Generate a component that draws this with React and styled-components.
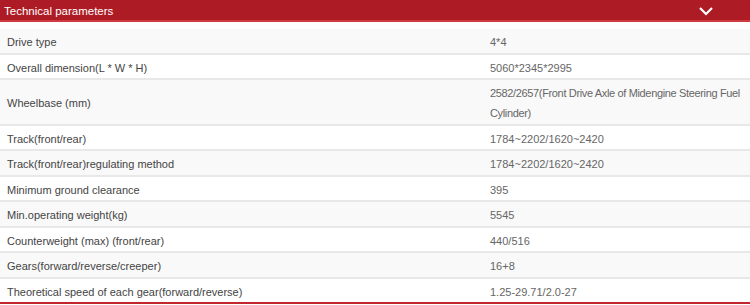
import styled, { createGlobalStyle } from "styled-components";

const rows = [
  ["Drive type", "4*4"],
  ["Overall dimension(L * W * H)", "5060*2345*2995"],
  ["Wheelbase (mm)", "2582/2657(Front Drive Axle of Midengine Steering Fuel\nCylinder)", true],
  ["Track(front/rear)", "1784~2202/1620~2420"],
  ["Track(front/rear)regulating method", "1784~2202/1620~2420"],
  ["Minimum ground clearance", "395"],
  ["Min.operating weight(kg)", "5545"],
  ["Counterweight (max) (front/rear)", "440/516"],
  ["Gears(forward/reverse/creeper)", "16+8"],
  ["Theoretical speed of each gear(forward/reverse)", "1.25-29.71/2.0-27"],
];

const GlobalStyle = createGlobalStyle`
  body {
    margin: 0;
    background: #fff;
    font-family: "Liberation Sans", Arial, sans-serif;
  }
`;

const Panel = styled.section`
  width: 750px;
  border-bottom: 2px solid #c1272d;
`;

const Header = styled.div`
  display: flex;
  align-items: center;
  justify-content: space-between;
  height: 22px;
  padding: 1px 36px 0 4px;
  box-sizing: border-box;
  background: #ad1c24;
  border-bottom: 2px solid #cf3b40;
  color: #fff;
  font-size: 11.5px;
`;

const Chevron = () => (
  <svg width="16" height="10" viewBox="0 0 16 10">
    <path d="M2 2 L8 8 L14 2" fill="none" stroke="#fff" strokeWidth="2.2" />
  </svg>
);

const Table = styled.div`
  margin-top: 7px;
`;

const Row = styled.div`
  display: grid;
  grid-template-columns: 483px 267px;
  background: ${(p) => (p.$odd ? "#f9f9f9" : "#fff")};
  border-bottom: 2px solid #e8e8e8;

  &:last-child {
    border-bottom: none;
  }
`;

const Cell = styled.div`
  display: flex;
  align-items: center;
  padding: 3px 0 0.5px 7px;
  line-height: 20px;
  font-size: 11px;
  white-space: pre;
  color: #666;
`;

const Label = styled(Cell)`
  color: #444;
`;

const Value = styled(Cell)`
  letter-spacing: ${(p) => (p.$tight ? "-0.35px" : "0")};
`;

export default function App() {
  return (
    <>
      <GlobalStyle />
      <Panel>
        <Header>
          <span>Technical parameters</span>
          <Chevron />
        </Header>
        <Table>
          {rows.map(([label, value, tight], i) => (
            <Row key={label} $odd={i % 2 === 0}>
              <Label>{label}</Label>
              <Value $tight={tight}>{value}</Value>
            </Row>
          ))}
        </Table>
      </Panel>
    </>
  );
}
